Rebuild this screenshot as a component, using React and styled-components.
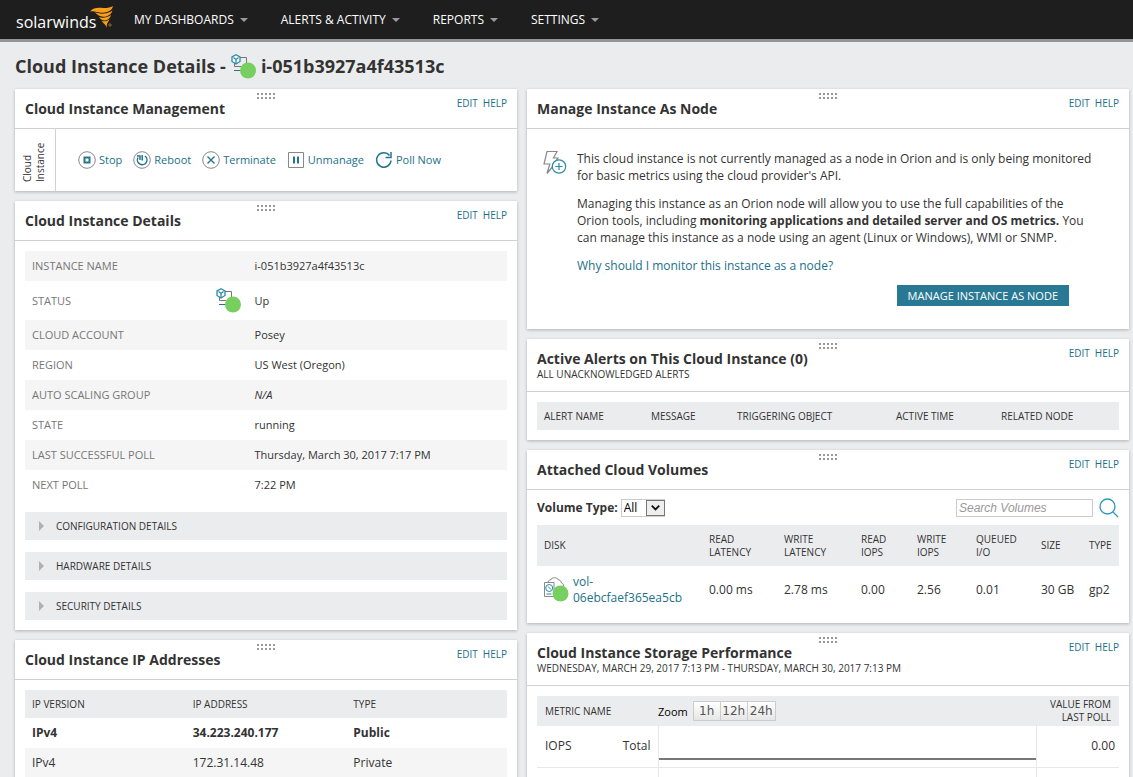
import React, { useState } from "react";
import styled, { createGlobalStyle } from "styled-components";

const details = [
    { label: "INSTANCE NAME", value: "i-051b3927a4f43513c" },
    { label: "STATUS", value: "Up", status: true },
    { label: "CLOUD ACCOUNT", value: "Posey" },
    { label: "REGION", value: "US West (Oregon)" },
    { label: "AUTO SCALING GROUP", value: "N/A", empty: true },
    { label: "STATE", value: "running" },
    { label: "LAST SUCCESSFUL POLL", value: "Thursday, March 30, 2017 7:17 PM" },
    { label: "NEXT POLL", value: "7:22 PM" },
];
const menu = ["MY DASHBOARDS", "ALERTS & ACTIVITY", "REPORTS", "SETTINGS"];
const sections = ["CONFIGURATION DETAILS", "HARDWARE DETAILS", "SECURITY DETAILS"];

const LogoMark = () => (
    <svg width="24" height="22" viewBox="0 0 24 22" fill="#f99d1c" aria-hidden="true">
        <path d="M0 5.500C3 1.500 8 1.500 13 2c4 .2 7-.5 10-2-.5 3-2.500 5-6 6-1.500.5-3 .7-4.500.7C8 7 5 4.500 0 5.500z" />
        <path d="M4.500 6.500c4 .5 6 1.500 9.500 1 3.500-.3 6-1.300 8.500-3-.8 3-3 5-6.500 6-2 .5-4 .4-6-.5-2.500-1-3.500-2.500-5.500-3.500z" />
        <path d="M9 11c3 1.200 8 .8 12-2-.8 3-2.500 4.800-5.500 5.500-2.800.5-5-1-6.500-3.500z" />
        <path d="M11.500 15c2.500.8 5.500.3 8-1.800-.8 2.300-2 3.500-2.500 4.800-.4 1.300-.3 2.500 0 4-1-3-3.500-4.500-5.500-7z" />
        <circle cx="20" cy="19" r="1.200" fill="none" stroke="#b87820" strokeWidth="0.800" />
    </svg>
);
const InstanceIcon = () => (
    <svg width="25" height="25" viewBox="0 0 25 25" fill="none" aria-hidden="true">
        <path d="M9 3.500h6.500V9M3.500 9v3.500H10" stroke="#777" />
        <path d="M3 16.500h7" stroke="#25758f" />
        <path d="M5 .8l4 2.200v4.500L5 10 1 7.500V3z" fill="#fff" stroke="#2b8aa5" strokeWidth="1.300" />
        <path d="M2.500 3.500L5 5.500l2.500-2M5 5.500V9.500" stroke="#2b8aa5" strokeWidth="1.300" />
        <circle cx="17" cy="16.500" r="8" fill="#77cf60" />
    </svg>
);
const VolumeIcon = () => (
    <svg width="25" height="25" viewBox="0 0 25 25" fill="none" aria-hidden="true">
        <path d="M4 5.500C4 3 6 3 6.500 3c1-3 7-3 8 0 2 0 2.500 1.500 2.500 2.500 2 .5 2.500 2 2.500 3.500" stroke="#888" />
        <path d="M.5 5.500h9.500v14H.5z" stroke="#888" />
        <circle cx="5.200" cy="11" r="3.500" stroke="#2b8aa5" />
        <path d="M4 9.500l3 3M2.500 17h5" stroke="#2b8aa5" />
        <circle cx="16.500" cy="16.500" r="8" fill="#77cf60" />
    </svg>
);
const BoltIcon = () => (
    <svg width="24" height="25" viewBox="0 0 24 25" fill="none" aria-hidden="true">
        <path d="M10.500 15.500L4 23.500l2.800-9.500H1L4 1.500h10L10.500 8H15l-2.500 3.500" stroke="#888" strokeWidth="1.200" />
        <circle cx="16" cy="16.500" r="6.700" stroke="#2b8aa5" fill="#fff" strokeWidth="1.200" />
        <path d="M16 13v7M12.500 16.500h7" stroke="#2b8aa5" strokeWidth="1.200" />
    </svg>
);
const SearchIcon = () => (
    <svg width="20" height="20" viewBox="0 0 20 20" fill="none" stroke="#2b9ab5" strokeWidth="1.300" aria-hidden="true">
        <circle cx="8.500" cy="8.500" r="7.500" />
        <path d="M14 14l5 5" />
    </svg>
);
const ActionIcon = ({ kind }) => (
    <svg width="18" height="18" viewBox="0 0 18 18" fill="none" stroke="#25758f" aria-hidden="true">
        {["stop", "reboot", "terminate"].includes(kind) && <circle cx="9" cy="9" r="8.300" stroke="#888" />}
        {kind === "stop" && <path d="M6.500 6.500h5v5h-5z" strokeWidth="2" />}
        {kind === "reboot" && <path d="M12 5a4.800 4.800 0 1 1-7 1.500M9.200 4v5.500M4 5h3v4" strokeWidth="1.500" />}
        {kind === "terminate" && <path d="M5.500 5.500l7 7M12.500 5.500l-7 7" strokeWidth="1.400" />}
        {kind === "unmanage" && (
            <>
                <path d="M1.500 1.500h15v15h-15z" stroke="#888" />
                <path d="M7 5.500v7M11 5.500v7" strokeWidth="2" />
            </>
        )}
        {kind === "poll" && <path d="M14.500 4.500A7.200 7.200 0 1 0 16 9.500M16 1v5.500h-5.500" strokeWidth="1.500" />}
    </svg>
);
const Grip = () => (
    <GripSvg width="19" height="7" viewBox="0 0 19 7" fill="#999" aria-hidden="true">
        {[0, 4, 8, 12, 16].map((x) => (
            <path key={x} d={`M${x} 0h2v2h-2zM${x} 4h2v2h-2z`} />
        ))}
    </GripSvg>
);

const Widget = ({ title, subtitle, children }) => (
    <Card>
        <Grip />
        <CardHeader>
            <div>
                <CardTitle>{title}</CardTitle>
                {subtitle && <Subtitle>{subtitle}</Subtitle>}
            </div>
            <CardLinks>
                <a href="#edit">EDIT</a>
                <a href="#help">HELP</a>
            </CardLinks>
        </CardHeader>
        {children}
    </Card>
);

const App = () => {
    const [range, setRange] = useState("");
    const [search, setSearch] = useState("");
    return (
        <Page>
            <GlobalStyle />
            <TopBar>
                <Logo href="#home">
                    <span>solarwinds</span>
                    <LogoMark />
                </Logo>
                <Nav>
                    {menu.map((item) => (
                        <NavButton key={item}>
                            {item}
                            <Caret />
                        </NavButton>
                    ))}
                </Nav>
            </TopBar>
            <PageTitle>
                Cloud Instance Details -
                <InstanceIcon />
                i-051b3927a4f43513c
            </PageTitle>
            <Columns>
                <Column>
                    <Widget title="Cloud Instance Management">
                        <Management>
                            <SideLabel>
                                Cloud
                                <br />
                                Instance
                            </SideLabel>
                            <Actions>
                                <Action><ActionIcon kind="stop" />Stop</Action>
                                <Action><ActionIcon kind="reboot" />Reboot</Action>
                                <Action><ActionIcon kind="terminate" />Terminate</Action>
                                <Action><ActionIcon kind="unmanage" />Unmanage</Action>
                                <Action><ActionIcon kind="poll" />Poll Now</Action>
                            </Actions>
                        </Management>
                    </Widget>
                    <Widget title="Cloud Instance Details">
                        <CardBody>
                            <DetailTable>
                                <colgroup>
                                    <col width="39%" />
                                    <col />
                                    <col width="53%" />
                                </colgroup>
                                <tbody>
                                    {details.map((row) => (
                                        <DetailRow key={row.label} $tall={row.status}>
                                            <th scope="row">{row.label}</th>
                                            <td>{row.status && <InstanceIcon />}</td>
                                            <td>{row.empty ? <em>{row.value}</em> : row.value}</td>
                                        </DetailRow>
                                    ))}
                                </tbody>
                            </DetailTable>
                            <Sections>
                                {sections.map((name) => (
                                    <SectionButton key={name}>
                                        <Triangle />
                                        {name}
                                    </SectionButton>
                                ))}
                            </Sections>
                        </CardBody>
                    </Widget>
                    <Widget title="Cloud Instance IP Addresses">
                        <CardBody>
                            <DataTable>
                                <thead>
                                    <tr>
                                        <th>IP VERSION</th>
                                        <th>IP ADDRESS</th>
                                        <th>TYPE</th>
                                    </tr>
                                </thead>
                                <tbody>
                                    <IpRow $primary>
                                        <td>IPv4</td>
                                        <td>34.223.240.177</td>
                                        <td>Public</td>
                                    </IpRow>
                                    <IpRow>
                                        <td>IPv4</td>
                                        <td>172.31.14.48</td>
                                        <td>Private</td>
                                    </IpRow>
                                </tbody>
                            </DataTable>
                        </CardBody>
                    </Widget>
                </Column>
                <Column>
                    <Widget title="Manage Instance As Node">
                        <ManageNode>
                            <BoltIcon />
                            <ManageText>
                                <p>
                                    This cloud instance is not currently managed as a node in Orion and is only being
                                    monitored for basic metrics using the cloud provider's API.
                                </p>
                                <p>
                                    Managing this instance as an Orion node will allow you to use the full capabilities
                                    of the Orion tools, including{" "}
                                    <b>monitoring applications and detailed server and OS metrics.</b> You can manage
                                    this instance as a node using an agent (Linux or Windows), WMI or SNMP.
                                </p>
                                <a href="#why">Why should I monitor this instance as a node?</a>
                            </ManageText>
                        </ManageNode>
                        <ManageFooter>
                            <PrimaryButton>MANAGE INSTANCE AS NODE</PrimaryButton>
                        </ManageFooter>
                    </Widget>
                    <Widget title="Active Alerts on This Cloud Instance (0)" subtitle="ALL UNACKNOWLEDGED ALERTS">
                        <CardBody>
                            <DataTable>
                                <colgroup>
                                    <col width="107" />
                                    <col width="86" />
                                    <col width="159" />
                                    <col width="105" />
                                    <col width="125" />
                                </colgroup>
                                <thead>
                                    <tr>
                                        <th>ALERT NAME</th>
                                        <th>MESSAGE</th>
                                        <th>TRIGGERING OBJECT</th>
                                        <th>ACTIVE TIME</th>
                                        <th>RELATED NODE</th>
                                    </tr>
                                </thead>
                            </DataTable>
                        </CardBody>
                    </Widget>
                    <Widget title="Attached Cloud Volumes">
                        <Filters>
                            <label htmlFor="volume-type">Volume Type:</label>
                            <SelectBox>
                                <select id="volume-type">
                                    <option>All</option>
                                </select>
                                <SelectArrow viewBox="0 0 17 15" aria-hidden="true">
                                    <path d="M4.500 5l4 4 4-4" fill="none" stroke="#111" strokeWidth="2" />
                                </SelectArrow>
                            </SelectBox>
                            <SearchInput
                                aria-label="Search Volumes"
                                placeholder="Search Volumes"
                                value={search}
                                onChange={(e) => setSearch(e.target.value)}
                            />
                            <IconButton aria-label="Search">
                                <SearchIcon />
                            </IconButton>
                        </Filters>
                        <VolumeBody>
                            <VolumeTable>
                                <colgroup>
                                    <col width="165" />
                                    <col width="75" />
                                    <col width="77" />
                                    <col width="56" />
                                    <col width="59" />
                                    <col width="65" />
                                    <col width="48" />
                                    <col width="37" />
                                </colgroup>
                                <thead>
                                    <tr>
                                        <th>DISK</th>
                                        <th>READ<br />LATENCY</th>
                                        <th>WRITE<br />LATENCY</th>
                                        <th>READ<br />IOPS</th>
                                        <th>WRITE<br />IOPS</th>
                                        <th>QUEUED<br />I/O</th>
                                        <th>SIZE</th>
                                        <th>TYPE</th>
                                    </tr>
                                </thead>
                                <tbody>
                                    <tr>
                                        <td>
                                            <Disk>
                                                <VolumeIcon />
                                                <a href="#volume">vol-<br />06ebcfaef365ea5cb</a>
                                            </Disk>
                                        </td>
                                        <td>0.00 ms</td>
                                        <td>2.78 ms</td>
                                        <td>0.00</td>
                                        <td>2.56</td>
                                        <td>0.01</td>
                                        <td>30 GB</td>
                                        <td>gp2</td>
                                    </tr>
                                </tbody>
                            </VolumeTable>
                        </VolumeBody>
                    </Widget>
                    <Widget
                        title="Cloud Instance Storage Performance"
                        subtitle="WEDNESDAY, MARCH 29, 2017 7:13 PM - THURSDAY, MARCH 30, 2017 7:13 PM"
                    >
                        <CardBody>
                            <PerfTable>
                                <colgroup>
                                    <col width="121" />
                                    <col width="378" />
                                    <col width="83" />
                                </colgroup>
                                <thead>
                                    <tr>
                                        <th>METRIC NAME</th>
                                        <th>
                                            <ZoomBar>
                                                <span>Zoom</span>
                                                <div>
                                                    {["1h", "12h", "24h"].map((item) => (
                                                        <ZoomButton
                                                            key={item}
                                                            $active={range === item}
                                                            onClick={() => setRange(item)}
                                                        >
                                                            {item}
                                                        </ZoomButton>
                                                    ))}
                                                </div>
                                            </ZoomBar>
                                        </th>
                                        <th>VALUE FROM<br />LAST POLL</th>
                                    </tr>
                                </thead>
                                <tbody>
                                    <tr>
                                        <td>
                                            <Metric>
                                                <span>IOPS</span>
                                                <span>Total</span>
                                            </Metric>
                                        </td>
                                        <td>
                                            <Chart viewBox="0 0 378 40" preserveAspectRatio="none" aria-hidden="true">
                                                <path d="M0 33h378" stroke="#777" strokeWidth="2" />
                                            </Chart>
                                        </td>
                                        <td>0.00</td>
                                    </tr>
                                    <tr>
                                        <td />
                                        <td />
                                        <td />
                                    </tr>
                                </tbody>
                            </PerfTable>
                        </CardBody>
                    </Widget>
                </Column>
            </Columns>
        </Page>
    );
};

export default App;

const GlobalStyle = createGlobalStyle`
    * {
        box-sizing: border-box;
    }
    body {
        margin: 0;
        background: #ebecee;
        color: #333;
        font-family: "Open Sans", "Noto Sans", sans-serif;
        font-size: 12px;
        line-height: 16px;
    }
    h1, h2, p {
        margin: 0;
    }
    svg {
        display: block;
        flex-shrink: 0;
    }
    a {
        color: #1b7089;
        text-decoration: none;
    }
    button {
        border: 0;
        padding: 0;
        background: none;
        color: inherit;
        font: inherit;
        cursor: pointer;
    }
`;
const Page = styled.div`
    height: 100vh;
    overflow-y: auto;
    scrollbar-width: none;
`;
const TopBar = styled.header`
    display: flex;
    height: 42px;
    padding-left: 16px;
    background: #1e1e1e;
    border-bottom: 3px solid #939496;
`;
const Logo = styled.a`
    display: flex;
    align-items: center;
    width: 118px;
    color: #fff;
    font-size: 16px;
    svg {
        margin: 0 0 6px -6px;
    }
    span {
        padding-top: 4px;
    }
`;
const Nav = styled.nav`
    display: flex;
    gap: 33px;
`;
const NavButton = styled.button`
    display: flex;
    align-items: center;
    gap: 6px;
    color: #fff;
`;
const Caret = styled.span`
    border: 4px solid transparent;
    border-top-color: #999;
    border-bottom: 0;
`;
const PageTitle = styled.h1`
    display: flex;
    align-items: center;
    gap: 5px;
    padding: 12px 15px 10px;
    font-size: 18px;
    line-height: 25px;
    font-weight: 700;
`;
const Columns = styled.main`
    display: grid;
    grid-template-columns: 502fr 602fr;
    gap: 10px;
    padding: 0 4px 10px 15px;
`;
const Column = styled.div`
    display: flex;
    flex-direction: column;
    gap: 10px;
    min-width: 0;
`;
const Card = styled.section`
    position: relative;
    background: #fff;
    box-shadow: 0 1px 3px rgba(0, 0, 0, 0.25);
`;
const GripSvg = styled.svg`
    position: absolute;
    top: 4px;
    left: calc(50% - 9px);
`;
const CardHeader = styled.div`
    display: flex;
    justify-content: space-between;
    padding: 10px;
    border-bottom: 1px solid #d0d1d3;
`;
const CardTitle = styled.h2`
    font-size: 14px;
    line-height: 19px;
    font-weight: 700;
`;
const Subtitle = styled.div`
    font-size: 10px;
    line-height: 13px;
`;
const CardLinks = styled.div`
    display: flex;
    gap: 5px;
    font-size: 10px;
    line-height: 9px;
`;
const CardBody = styled.div`
    padding: 10px;
`;
const Management = styled.div`
    display: flex;
    height: 62px;
`;
const SideLabel = styled.div`
    width: 41px;
    padding: 9px 6px;
    border-left: 1px solid #d0d1d3;
    writing-mode: vertical-rl;
    transform: rotate(180deg);
    font-size: 10px;
    line-height: 13px;
`;
const Actions = styled.div`
    display: flex;
    align-items: center;
    gap: 11px;
    padding-left: 22px;
`;
const Action = styled.button`
    display: flex;
    align-items: center;
    gap: 3px;
    color: #1b7089;
    font-size: 11px;
`;
const DetailTable = styled.table`
    width: 100%;
    border-collapse: collapse;
    table-layout: fixed;
    font-size: 11px;
    th {
        padding: 0 7px;
        color: #777;
        font-weight: 400;
        text-align: left;
    }
    td {
        padding: 0 3px;
    }
`;
const DetailRow = styled.tr`
    height: ${({ $tall }) => ($tall ? "39px" : "30px")};
    &:nth-child(odd) {
        background: #f5f5f5;
    }
`;
const Sections = styled.div`
    display: flex;
    flex-direction: column;
    gap: 12px;
    padding-top: 12px;
`;
const SectionButton = styled.button`
    display: flex;
    align-items: center;
    gap: 12px;
    height: 28px;
    padding: 0 14px;
    background: #ebecee;
    font-size: 10px;
`;
const Triangle = styled.span`
    border: 5px solid transparent;
    border-left-color: #b0b1b3;
    border-right: 0;
`;
const DataTable = styled.table`
    width: 100%;
    border-collapse: collapse;
    table-layout: fixed;
    th {
        height: 28px;
        padding: 0 0 0 7px;
        background: #ebecee;
        font-size: 10px;
        line-height: 13px;
        font-weight: 400;
        text-align: left;
    }
    td {
        padding: 0 0 0 7px;
    }
`;
const IpRow = styled.tr`
    height: 30px;
    font-weight: ${({ $primary }) => ($primary ? 700 : 400)};
    background: ${({ $primary }) => ($primary ? "#fff" : "#f5f5f5")};
`;
const ManageNode = styled.div`
    display: flex;
    gap: 10px;
    padding: 21px 35px 0 16px;
`;
const ManageText = styled.div`
    display: flex;
    flex-direction: column;
    gap: 11px;
    line-height: 17px;
`;
const ManageFooter = styled.div`
    display: flex;
    justify-content: flex-end;
    padding: 11px 60px 23px;
`;
const PrimaryButton = styled.button`
    height: 21px;
    padding: 0 11px;
    background: #297994;
    color: #fff;
    font-size: 11px;
`;
const Filters = styled.div`
    display: flex;
    align-items: center;
    height: 35px;
    padding: 0 10px;
    label {
        font-weight: 700;
        padding-right: 3px;
    }
`;
const SelectBox = styled.div`
    position: relative;
    select {
        display: block;
        appearance: none;
        width: 44px;
        height: 18px;
        padding: 0 2px;
        border: 1px solid #ccc;
        border-radius: 0;
        background: #fff;
        color: #000;
        font: inherit;
    }
`;
const SelectArrow = styled.svg`
    position: absolute;
    top: 1px;
    right: 0;
    width: 19px;
    height: 16px;
    border: 1px solid #777;
    background: #eee;
    pointer-events: none;
`;
const SearchInput = styled.input`
    width: 137px;
    height: 18px;
    margin-left: auto;
    padding: 0 2px;
    border: 1px solid #ccc;
    font: 12px "Liberation Sans", sans-serif;
    &::placeholder {
        color: #999;
        font-style: italic;
    }
`;
const IconButton = styled.button`
    margin-left: 6px;
`;
const VolumeBody = styled.div`
    padding: 0 10px 10px;
`;
const VolumeTable = styled(DataTable)`
    th {
        height: 41px;
    }
    td {
        height: 47px;
        white-space: nowrap;
    }
`;
const Disk = styled.div`
    display: flex;
    align-items: center;
    gap: 4px;
`;
const PerfTable = styled(DataTable)`
    th {
        height: 30px;
    }
    td {
        height: 41px;
        border-bottom: 1px solid #e8e8e8;
    }
    th:first-child,
    td:first-child {
        padding: 0 7px 0 8px;
    }
    th:nth-child(2) {
        padding: 0;
    }
    td:nth-child(2) {
        padding: 0;
        border-left: 1px solid #e8e8e8;
        border-right: 1px solid #e8e8e8;
    }
    th:last-child {
        padding-right: 8px;
        text-align: right;
    }
    td:last-child {
        padding-right: 4px;
        text-align: right;
    }
`;
const Metric = styled.div`
    display: flex;
    justify-content: space-between;
`;
const Chart = styled.svg`
    width: 100%;
    height: 40px;
`;
const ZoomBar = styled.div`
    display: flex;
    align-items: center;
    gap: 5px;
    color: #000;
    font-size: 11px;
    div {
        display: flex;
        border: 1px solid #ccc;
    }
`;
const ZoomButton = styled.button`
    width: 27px;
    height: 18px;
    border-right: 1px solid #ccc;
    background: ${({ $active }) => ($active ? "#ddd" : "linear-gradient(#fff, #e6e6e6)")};
    color: #555;
    font: 12px "DejaVu Sans", sans-serif;
    &:last-child {
        border-right: 0;
    }
`;
